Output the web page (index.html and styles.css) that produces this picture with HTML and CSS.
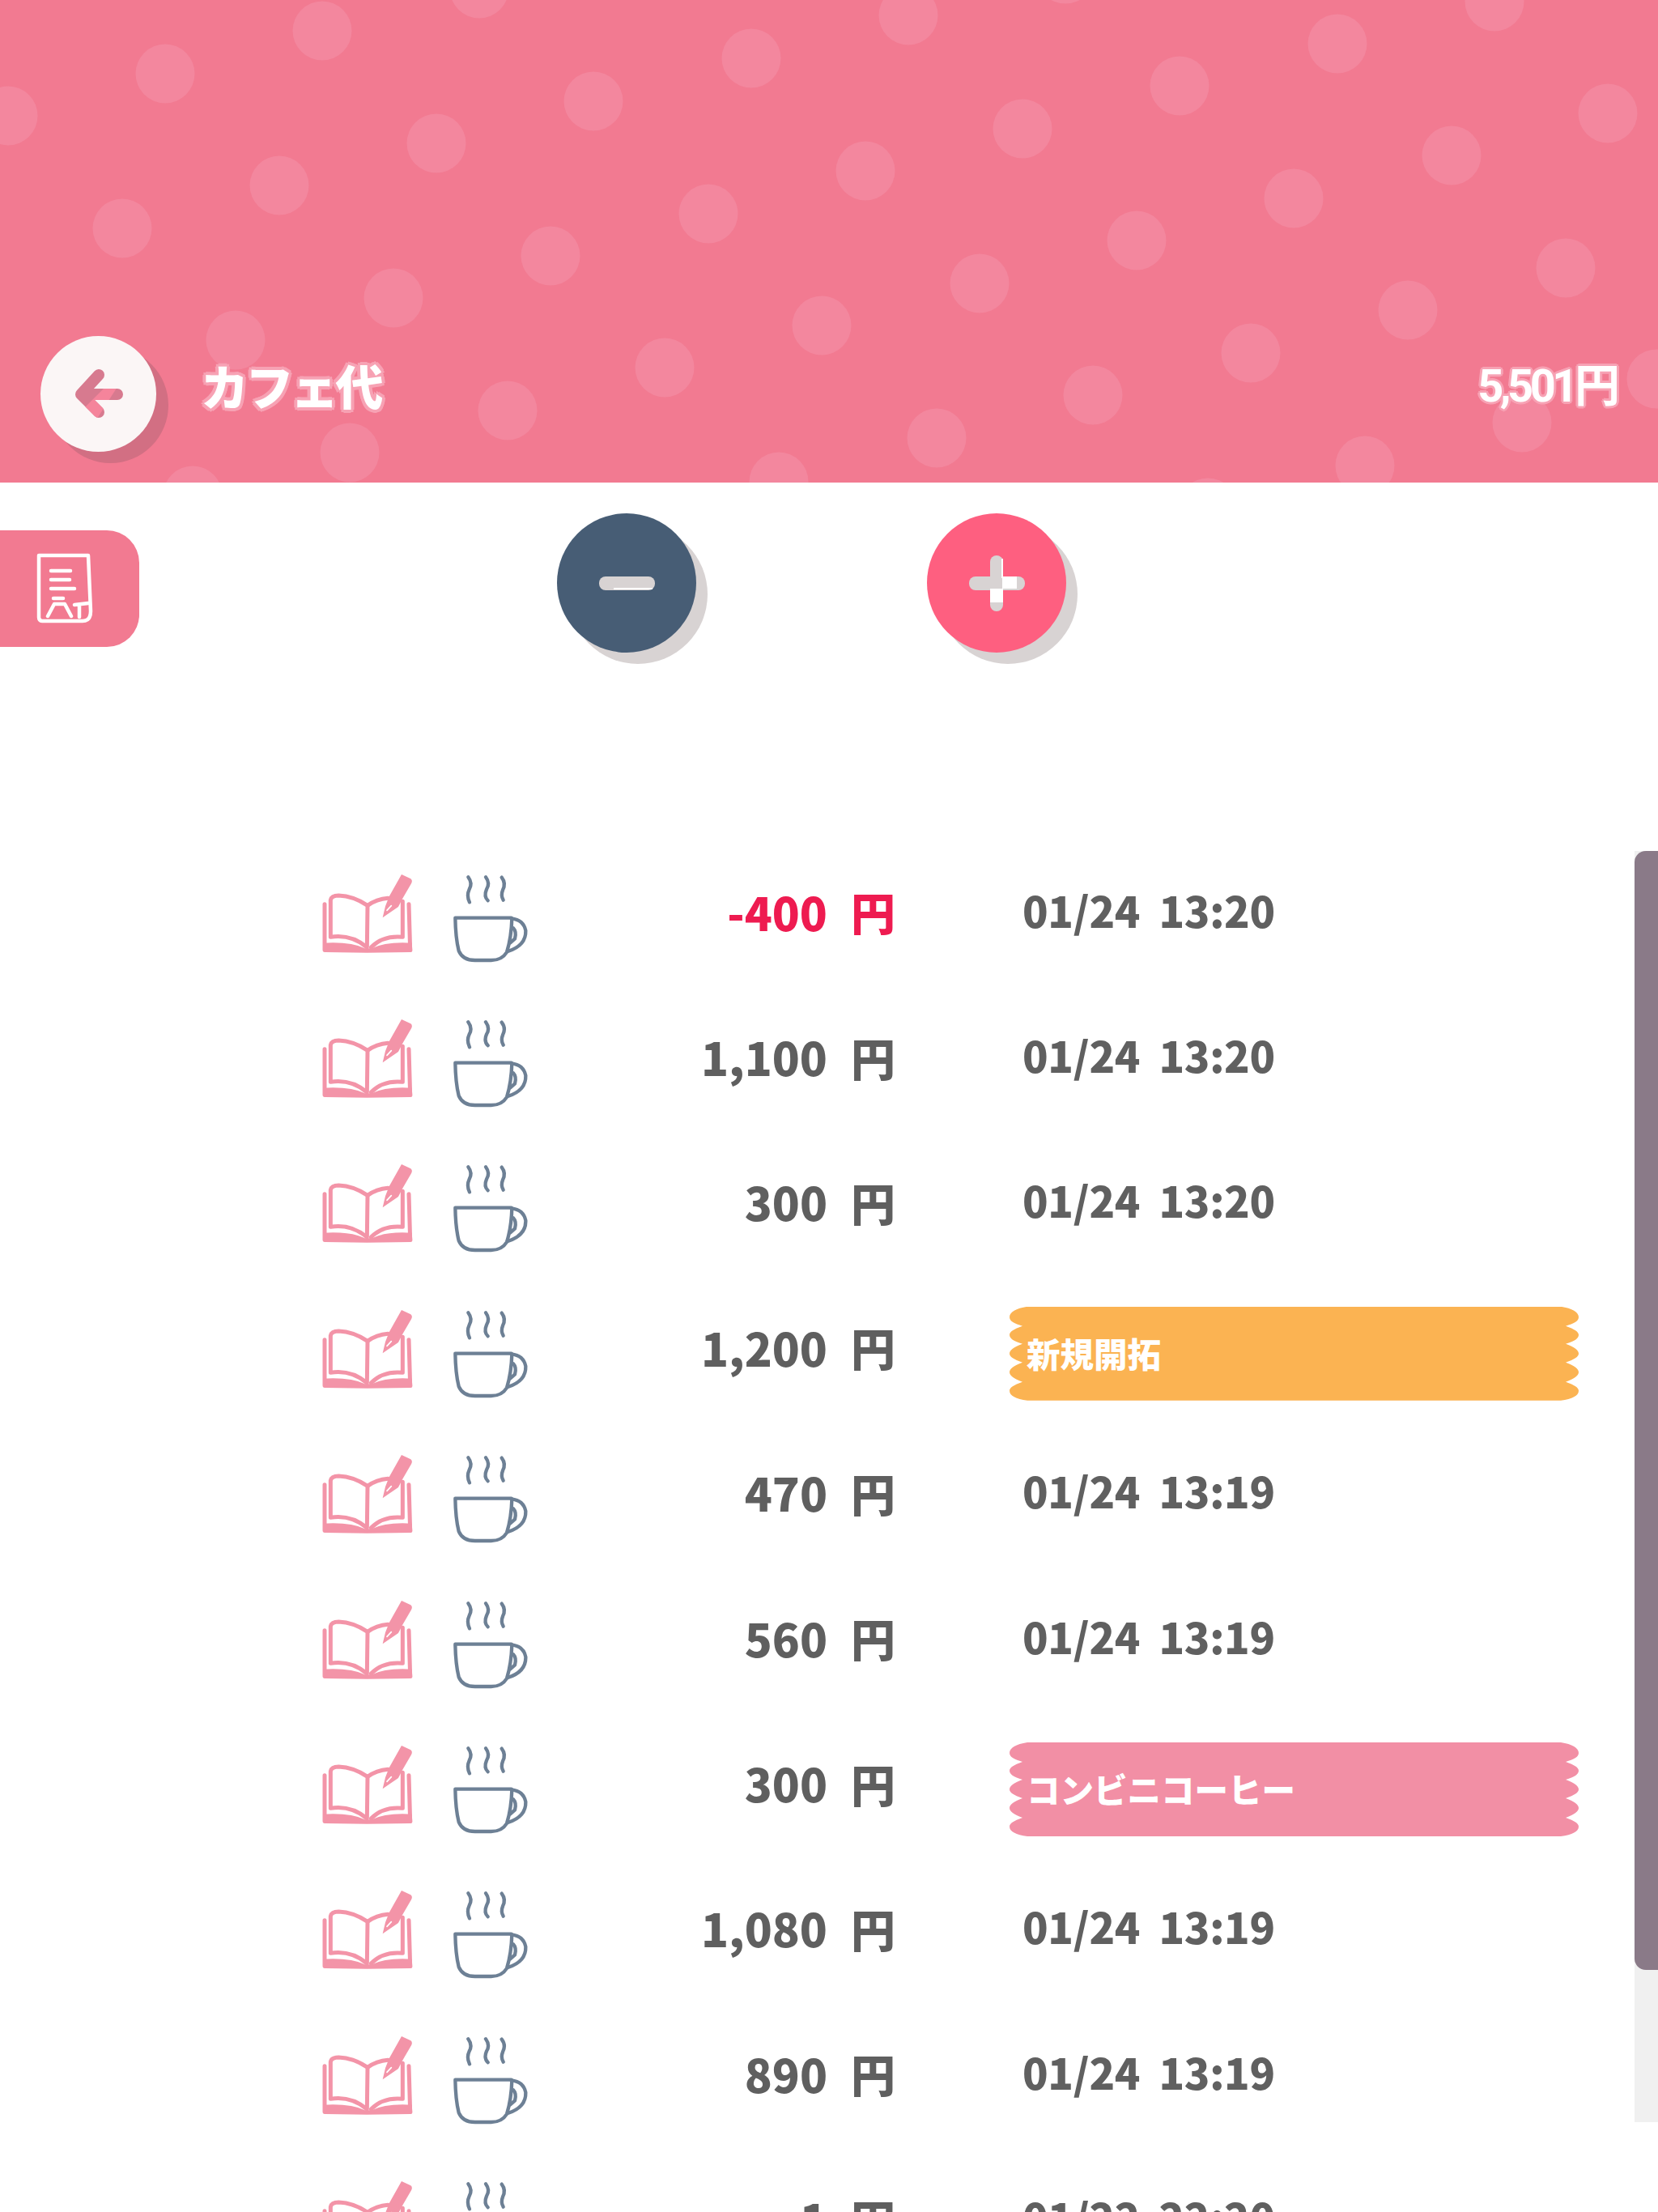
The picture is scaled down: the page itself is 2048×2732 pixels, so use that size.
FILE: index.html
```html
<!DOCTYPE html>
<html lang="ja">
<head>
<meta charset="utf-8">
<title>カフェ代</title>
<link rel="stylesheet" href="styles.css">
</head>
<body>
<svg class="defs" width="0" height="0" aria-hidden="true">
  <symbol id="book" viewBox="0 0 390 360">
    <g fill="none" stroke="#f394a8" stroke-width="15" stroke-linecap="round" stroke-linejoin="round">
      <path d="M55 262 L55 125 Q58 108 85 108 Q140 110 192 145 L190 300 Q130 250 55 262"/>
      <path d="M192 145 Q225 122 268 118 M322 130 L322 262 Q250 255 205 300"/>
      <path d="M33 140 L33 310 M345 140 L350 310"/>
    </g>
    <path d="M27 284 Q130 278 182 304 L208 304 Q260 278 356 284 L358 312 Q358 318 350 318 L190 320 L35 318 Q27 318 27 310Z" fill="#f394a8"/>
    <path d="M318 30 L352 46 Q360 52 354 64 L320 122 L306 150 L248 190 L258 148 L272 112Z" fill="#f394a8"/>
    <path d="M264 163 L280 146" stroke="#fff" stroke-width="5" fill="none" stroke-linecap="round"/>
  </symbol>
  <symbol id="cup" viewBox="0 0 330 375">
    <g fill="none" stroke="#6d8095" stroke-width="13" stroke-linecap="round" stroke-linejoin="round">
      <path d="M85 37 Q102 60 89 82 Q78 105 90 130"/>
      <path d="M150 37 Q167 60 153 82 Q142 108 158 124"/>
      <path d="M209 38 Q226 60 213 85 Q205 105 215 122"/>
      <path d="M37 188 L245 188 M37 188 Q38 260 50 310 Q65 345 110 345 L170 345 Q210 345 228 315 Q245 260 247 190"/>
      <path d="M245 190 Q290 195 298 235 Q300 290 232 312"/>
      <path d="M252 226 Q265 240 258 265 L241 280"/>
    </g>
  </symbol>
</svg>

<header class="hero">
  <svg class="dots" viewBox="0 0 2048 596" aria-hidden="true">
    <g fill="#f3879e">
      <circle cx="398" cy="38" r="36.5"/><circle cx="592" cy="-14" r="36.5"/><circle cx="204" cy="91" r="36.5"/>
      <circle cx="928" cy="72" r="36.5"/><circle cx="10" cy="143" r="36.5"/><circle cx="733" cy="125" r="36.5"/>
      <circle cx="539" cy="177" r="36.5"/><circle cx="345" cy="229" r="36.5"/><circle cx="151" cy="282" r="36.5"/>
      <circle cx="875" cy="264" r="36.5"/><circle cx="680" cy="316" r="36.5"/><circle cx="486" cy="368" r="36.5"/>
      <circle cx="291" cy="420" r="36.5"/><circle cx="1015" cy="402" r="36.5"/><circle cx="821" cy="454" r="36.5"/>
      <circle cx="627" cy="507" r="36.5"/><circle cx="432" cy="559" r="36.5"/><circle cx="238" cy="612" r="36.5"/>
      <circle cx="962" cy="595" r="36.5"/><circle cx="1122" cy="19" r="36.5"/><circle cx="1316" cy="-32" r="36.5"/>
      <circle cx="1846" cy="2" r="36.5"/><circle cx="1652" cy="54" r="36.5"/><circle cx="1457" cy="106" r="36.5"/>
      <circle cx="1263" cy="159" r="36.5"/><circle cx="1069" cy="211" r="36.5"/><circle cx="1986" cy="140" r="36.5"/>
      <circle cx="1793" cy="192" r="36.5"/><circle cx="1598" cy="245" r="36.5"/><circle cx="1404" cy="297" r="36.5"/>
      <circle cx="1210" cy="350" r="36.5"/><circle cx="1934" cy="331" r="36.5"/><circle cx="1739" cy="383" r="36.5"/>
      <circle cx="1545" cy="436" r="36.5"/><circle cx="1350" cy="488" r="36.5"/><circle cx="1157" cy="541" r="36.5"/>
      <circle cx="1880" cy="522" r="36.5"/><circle cx="1686" cy="575" r="36.5"/><circle cx="1492" cy="627" r="36.5"/>
      <circle cx="2046" cy="468" r="36.5"/>
    </g>
  </svg>
  <div class="hero-bar">
    <div class="back">
      <svg class="back-icon" viewBox="50 415 143 143" aria-hidden="true">
        <defs>
          <clipPath id="arrow-band"><path d="M138 470 L150 470 L118 520 L104 504Z"/></clipPath>
        </defs>
        <path d="M122 463 L100 487 L122 509 M100 487 L145 487" fill="none" stroke="#d77a8f" stroke-width="14" stroke-linecap="round" stroke-linejoin="round"/>
        <path d="M122 463 L100 487 L122 509 M100 487 L145 487" fill="none" stroke="#f5849b" stroke-width="14" stroke-linecap="round" stroke-linejoin="round" clip-path="url(#arrow-band)"/>
      </svg>
    </div>
    <h1 class="title">カフェ代</h1>
    <div class="total">5,501<span class="total-yen">円</span></div>
  </div>
</header>

<section class="tools">
  <div class="side-tab">
    <svg class="side-icon" viewBox="40 680 80 95" aria-hidden="true">
      <g fill="none" stroke="#fff" stroke-width="4.5" stroke-linecap="round" stroke-linejoin="round">
        <path d="M48 686 L109 686 L112 755 Q112 767 102 767 L52 767 Q48 767 48 762Z"/>
        <path d="M63 705 L87 705 M63 716 L86 716 M63 727 L92 727 M66 739 L78 739"/>
        <path d="M59 761 L67 746 L80 746 L88 761"/>
        <path d="M92 747 L109 745 M98 748 L98 762"/>
      </g>
    </svg>
  </div>
  <div class="round minus">
    <svg class="round-icon" viewBox="0 0 172 172" aria-hidden="true">
      <rect x="52" y="78" width="69" height="17" rx="8" fill="#d8d3d3"/>
      <rect x="70" y="92" width="48" height="2" fill="#fff"/>
    </svg>
  </div>
  <div class="round plus">
    <svg class="round-icon" viewBox="0 0 172 172" aria-hidden="true">
      <rect x="52" y="78" width="69" height="17" rx="8" fill="#d8d3d3"/>
      <rect x="78" y="52" width="16" height="69" rx="8" fill="#d8d3d3"/>
      <rect x="93" y="78" width="18" height="15" fill="#fff"/>
      <rect x="78" y="93" width="16" height="17" fill="#fff"/>
      <rect x="92" y="56" width="2" height="24" fill="#fff"/>
    </svg>
  </div>
</section>

<main class="list">
  <div class="row">
    <svg class="book"><use href="#book"/></svg><svg class="cup"><use href="#cup"/></svg>
    <div class="amount neg"><span class="num">-400</span><span class="yen">円</span></div>
    <div class="date">01/24  13:20</div>
  </div>
  <div class="row">
    <svg class="book"><use href="#book"/></svg><svg class="cup"><use href="#cup"/></svg>
    <div class="amount"><span class="num">1,100</span><span class="yen">円</span></div>
    <div class="date">01/24  13:20</div>
  </div>
  <div class="row">
    <svg class="book"><use href="#book"/></svg><svg class="cup"><use href="#cup"/></svg>
    <div class="amount"><span class="num">300</span><span class="yen">円</span></div>
    <div class="date">01/24  13:20</div>
  </div>
  <div class="row">
    <svg class="book"><use href="#book"/></svg><svg class="cup"><use href="#cup"/></svg>
    <div class="amount"><span class="num">1,200</span><span class="yen">円</span></div>
    <div class="tag tag-orange">新規開拓</div>
  </div>
  <div class="row">
    <svg class="book"><use href="#book"/></svg><svg class="cup"><use href="#cup"/></svg>
    <div class="amount"><span class="num">470</span><span class="yen">円</span></div>
    <div class="date">01/24  13:19</div>
  </div>
  <div class="row">
    <svg class="book"><use href="#book"/></svg><svg class="cup"><use href="#cup"/></svg>
    <div class="amount"><span class="num">560</span><span class="yen">円</span></div>
    <div class="date">01/24  13:19</div>
  </div>
  <div class="row">
    <svg class="book"><use href="#book"/></svg><svg class="cup"><use href="#cup"/></svg>
    <div class="amount"><span class="num">300</span><span class="yen">円</span></div>
    <div class="tag tag-pink">コンビニコーヒー</div>
  </div>
  <div class="row">
    <svg class="book"><use href="#book"/></svg><svg class="cup"><use href="#cup"/></svg>
    <div class="amount"><span class="num">1,080</span><span class="yen">円</span></div>
    <div class="date">01/24  13:19</div>
  </div>
  <div class="row">
    <svg class="book"><use href="#book"/></svg><svg class="cup"><use href="#cup"/></svg>
    <div class="amount"><span class="num">890</span><span class="yen">円</span></div>
    <div class="date">01/24  13:19</div>
  </div>
  <div class="row">
    <svg class="book"><use href="#book"/></svg><svg class="cup"><use href="#cup"/></svg>
    <div class="amount"><span class="num">1</span><span class="yen">円</span></div>
    <div class="date">01/22  22:20</div>
  </div>
  <div class="scrollbar"><div class="thumb"></div></div>
</main>
</body>
</html>
```
FILE: styles.css
```css
* { box-sizing: border-box; }
html, body {
  margin: 0;
  width: 2048px;
  height: 2732px;
  overflow: hidden;
  background: #fff;
  font-family: "Noto Sans CJK JP", "Noto Sans", sans-serif;
}
.defs { display: block; }

.hero {
  position: relative;
  height: 596px;
  background: #f27a91;
  overflow: hidden;
}
.dots { position: absolute; inset: 0; width: 2048px; height: 596px; }
.hero-bar {
  position: relative;
  display: flex;
  align-items: center;
  height: 100%;
  padding: 415px 47px 38px 50px;
}
.back {
  width: 143px;
  height: 143px;
  flex: none;
  border-radius: 50%;
  background: #fbf6f6;
  box-shadow: 15px 14px 0 #d26f83;
}
.back-icon { display: block; width: 143px; height: 143px; }
.title {
  margin: -22px 0 0 55px;
  font-size: 59px;
  font-weight: 900;
  letter-spacing: -3.5px;
  line-height: 1;
  color: #fff;
  text-shadow: 4px 0 0 #f7a2b4, -4px 0 0 #f7a2b4, 0 4px 0 #f7a2b4, 0 -4px 0 #f7a2b4,
    3px 3px 0 #f7a2b4, -3px 3px 0 #f7a2b4, 3px -3px 0 #f7a2b4, -3px -3px 0 #f7a2b4;
}
.total {
  margin: -24px 0 0 auto;
  font-family: Roboto, "Noto Sans CJK JP", sans-serif;
  font-size: 56px;
  font-weight: 700;
  letter-spacing: -4.5px;
  line-height: 1;
  color: #fff;
  text-shadow: 3px 0 0 #f7a2b4, -3px 0 0 #f7a2b4, 0 3px 0 #f7a2b4, 0 -3px 0 #f7a2b4,
    2px 2px 0 #f7a2b4, -2px 2px 0 #f7a2b4, 2px -2px 0 #f7a2b4, -2px -2px 0 #f7a2b4;
}
.total-yen { font-family: "Noto Sans CJK JP", sans-serif; font-size: 56px; letter-spacing: 0; }

.tools {
  display: flex;
  align-items: flex-start;
  height: 442px;
}
.side-tab {
  flex: none;
  width: 172px;
  height: 144px;
  margin-top: 59px;
  background: #f27a91;
  border-radius: 0 40px 40px 0;
}
.side-icon { display: block; width: 80px; height: 95px; margin: 25px 0 0 40px; }
.round {
  flex: none;
  width: 172px;
  height: 172px;
  margin-top: 38px;
  border-radius: 50%;
  box-shadow: 14px 14px 0 #d8d3d3;
}
.round-icon { display: block; width: 172px; height: 172px; }
.minus { margin-left: 516px; background: #475d75; }
.plus { margin-left: 285px; background: #fe5f80; }

.list { position: relative; }
.row {
  display: grid;
  grid-template-columns: 130px 110px 442px 703px;
  column-gap: 30px;
  align-items: center;
  height: 179.4px;
  padding-left: 390px;
}
.book { width: 130px; height: 120px; margin-top: 4px; }
.cup { width: 110px; height: 125px; margin-top: 11px; }
.amount {
  display: flex;
  justify-content: flex-end;
  align-items: center;
  gap: 29px;
  margin: 0 26px 4px -30px;
  color: #5f5f5f;
  font-weight: 900;
  line-height: 1;
}
.num { font-size: 56px; }
.yen { font-size: 55px; }
.neg { color: #ee1b50; }
.date {
  margin: 0 0 8px 101px;
  color: #606060;
  font-size: 52px;
  font-weight: 900;
  line-height: 1;
  white-space: pre;
  letter-spacing: -0.3px;
}
.tag {
  display: flex;
  align-items: center;
  width: 703px;
  height: 116px;
  margin: 12px 0 0 85px;
  padding-left: 21px;
  color: #fff;
  font-size: 41.5px;
  font-weight: 900;
  line-height: 1;
  clip-path: path("M22 0 L681 0 C695 2 703 7 703 13 C703 18 697 21 687 24 C698 28 703 31 703 35 C703 39 698 43 687 46 C698 50 703 54 703 58 C703 62 698 65 687 69 C698 73 703 77 703 81 C703 85 698 89 687 93 C698 97 703 100 703 104 C703 110 695 114 681 116 L22 116 C8 114 0 110 0 104 C0 100 5 97 16 93 C5 89 0 85 0 81 C0 77 5 73 16 69 C5 65 0 62 0 58 C0 54 5 50 16 46 C5 43 0 39 0 35 C0 31 5 28 16 24 C6 21 0 18 0 13 C0 7 8 2 22 0 Z");
}
.tag-orange { background: #fbb352; }
.tag-pink { background: #f28fa5; }

.scrollbar {
  position: absolute;
  top: 13px;
  right: 0;
  width: 29px;
  height: 1570px;
  background: #f0f0f0;
}
.thumb {
  height: 1382px;
  background: #8a7a88;
  border-radius: 14px 0 0 14px;
}
```
